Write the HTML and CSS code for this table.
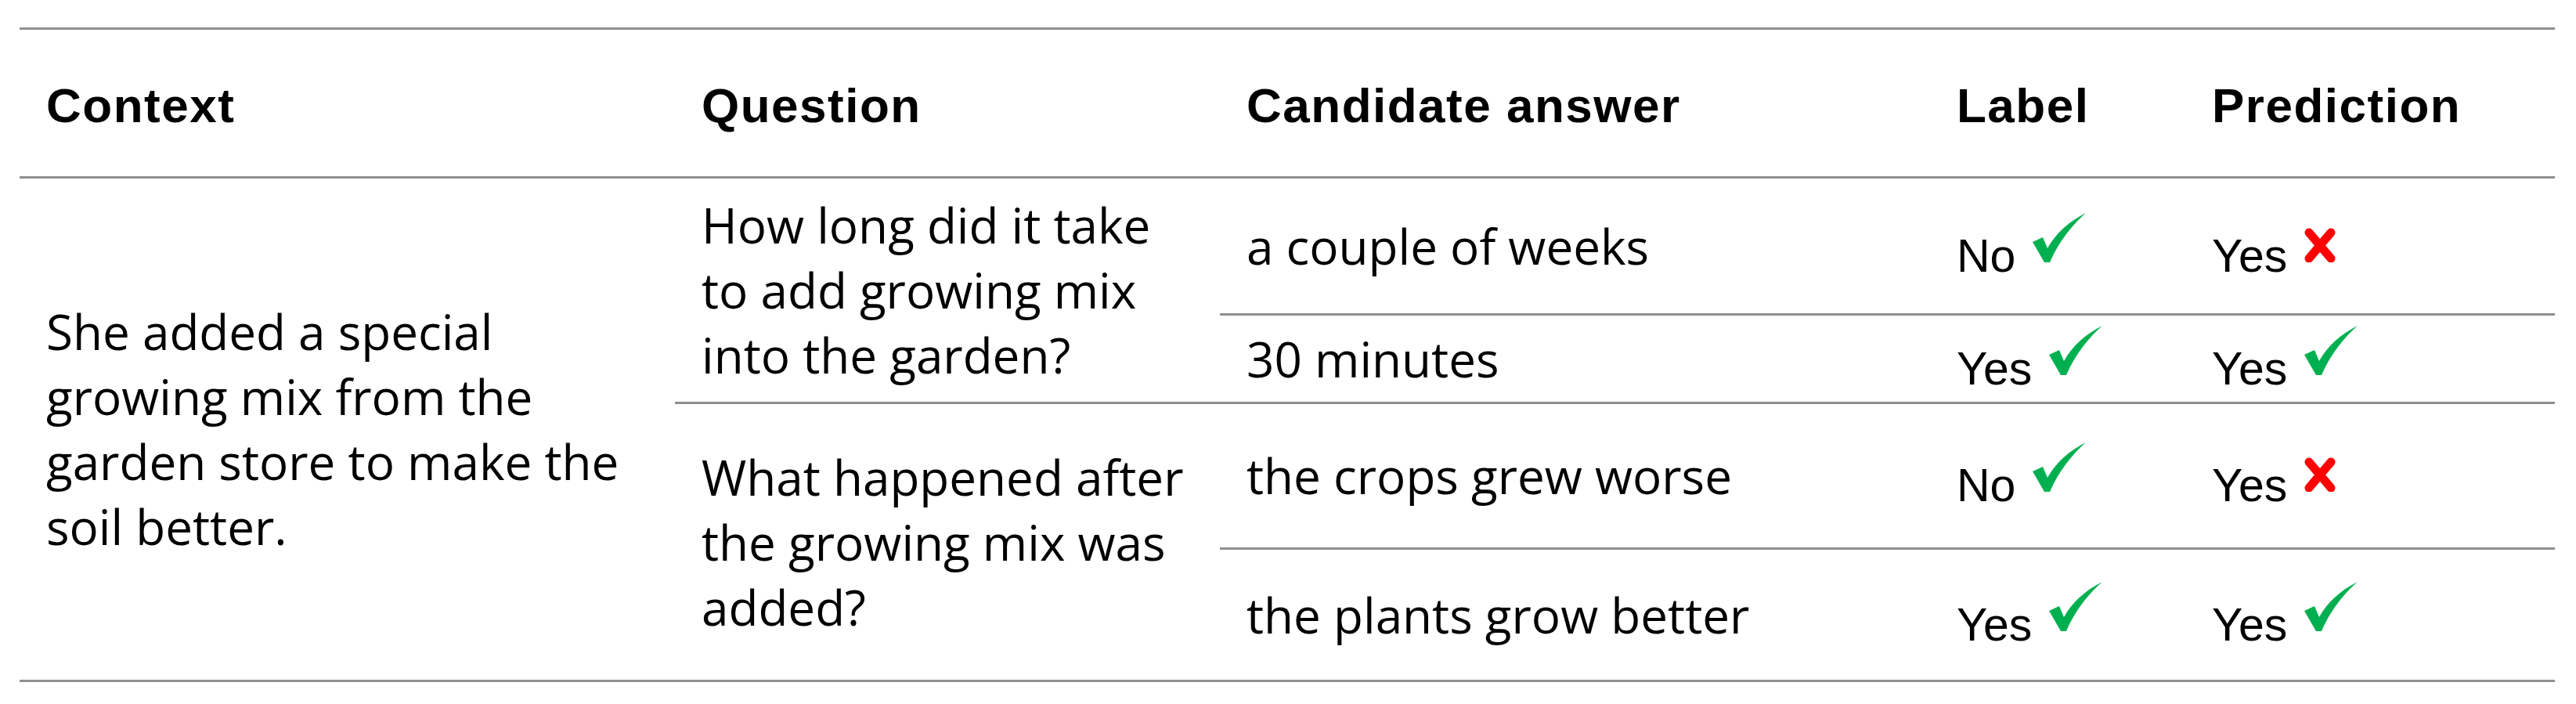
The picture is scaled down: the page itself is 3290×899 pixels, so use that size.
FILE: index.html
```html
<!DOCTYPE html>
<html lang="en">
<head>
<meta charset="utf-8">
<title>Context / Question / Answer table</title>
<link rel="stylesheet" href="styles.css">
</head>
<body>
<div class="page">
  <div class="qa-table">
    <div class="cell head">Context</div>
    <div class="cell head">Question</div>
    <div class="cell head">Candidate answer</div>
    <div class="cell head">Label</div>
    <div class="cell head">Prediction</div>

    <div class="cell text context">She added a special growing mix from the garden store to make the soil better.</div>

    <div class="cell text question">How long did it take to add growing mix into the garden?</div>
    <div class="cell text">a couple of weeks</div>
    <div class="cell val"><span class="mark">No<svg class="ok" viewBox="0 0 68 63"><path d="M0 37 L13 31 L19 45 C30 25 48 10 68 0 C52 14 34 35 22 63 L15 63 Z"/></svg></span></div>
    <div class="cell val"><span class="mark">Yes<svg class="bad" viewBox="0 0 45 63"><path d="M6 25 L34 58 M34 25 L6 58"/></svg></span></div>

    <div class="cell text">30 minutes</div>
    <div class="cell val"><span class="mark">Yes<svg class="ok" viewBox="0 0 68 63"><path d="M0 37 L13 31 L19 45 C30 25 48 10 68 0 C52 14 34 35 22 63 L15 63 Z"/></svg></span></div>
    <div class="cell val"><span class="mark">Yes<svg class="ok" viewBox="0 0 68 63"><path d="M0 37 L13 31 L19 45 C30 25 48 10 68 0 C52 14 34 35 22 63 L15 63 Z"/></svg></span></div>

    <div class="cell text question">What happened after the growing mix was added?</div>
    <div class="cell text">the crops grew worse</div>
    <div class="cell val"><span class="mark">No<svg class="ok" viewBox="0 0 68 63"><path d="M0 37 L13 31 L19 45 C30 25 48 10 68 0 C52 14 34 35 22 63 L15 63 Z"/></svg></span></div>
    <div class="cell val"><span class="mark">Yes<svg class="bad" viewBox="0 0 45 63"><path d="M6 25 L34 58 M34 25 L6 58"/></svg></span></div>

    <div class="cell text">the plants grow better</div>
    <div class="cell val"><span class="mark">Yes<svg class="ok" viewBox="0 0 68 63"><path d="M0 37 L13 31 L19 45 C30 25 48 10 68 0 C52 14 34 35 22 63 L15 63 Z"/></svg></span></div>
    <div class="cell val"><span class="mark">Yes<svg class="ok" viewBox="0 0 68 63"><path d="M0 37 L13 31 L19 45 C30 25 48 10 68 0 C52 14 34 35 22 63 L15 63 Z"/></svg></span></div>
  </div>
</div>
</body>
</html>
```

FILE: styles.css
```css
html, body {
  margin: 0;
  padding: 0;
  background: #ffffff;
  color: #000000;
}

.page {
  padding: 35px 0 0 25px;
  width: 3265px;
  height: 864px;
}

.qa-table {
  display: grid;
  grid-template-columns: 837px 696px 907px 326px 472px;
  grid-template-rows: 190px 175px 113px 186px 169px;
  border-top: 3px solid #8f8f8f;
  width: 3238px;
}

.cell {
  box-sizing: border-box;
  border-bottom: 3px solid #8f8f8f;
  display: flex;
  align-items: center;
  padding-left: 34px;
  padding-right: 30px;
}

.head {
  font-family: "Liberation Sans", Arial, sans-serif;
  font-weight: 700;
  font-size: 62px;
  letter-spacing: 1.5px;
  padding-top: 6px;
}

.text {
  font-family: "Open Sans", "Liberation Sans", sans-serif;
  font-size: 62px;
  line-height: 83px;
}

.context {
  grid-row: span 4;
}

.question {
  grid-row: span 2;
}

.val {
  font-family: "Liberation Sans", Arial, sans-serif;
  font-size: 59px;
  padding-top: 4px;
}

.mark {
  display: block;
  white-space: nowrap;
}

.mark svg {
  display: inline-block;
  vertical-align: baseline;
  height: 63px;
  margin-bottom: 12px;
  margin-left: 22px;
}

.ok {
  width: 68px;
  fill: #00b050;
}

.bad {
  width: 45px;
  fill: none;
  stroke: #ff0000;
  stroke-width: 11;
  stroke-linecap: round;
}
```
